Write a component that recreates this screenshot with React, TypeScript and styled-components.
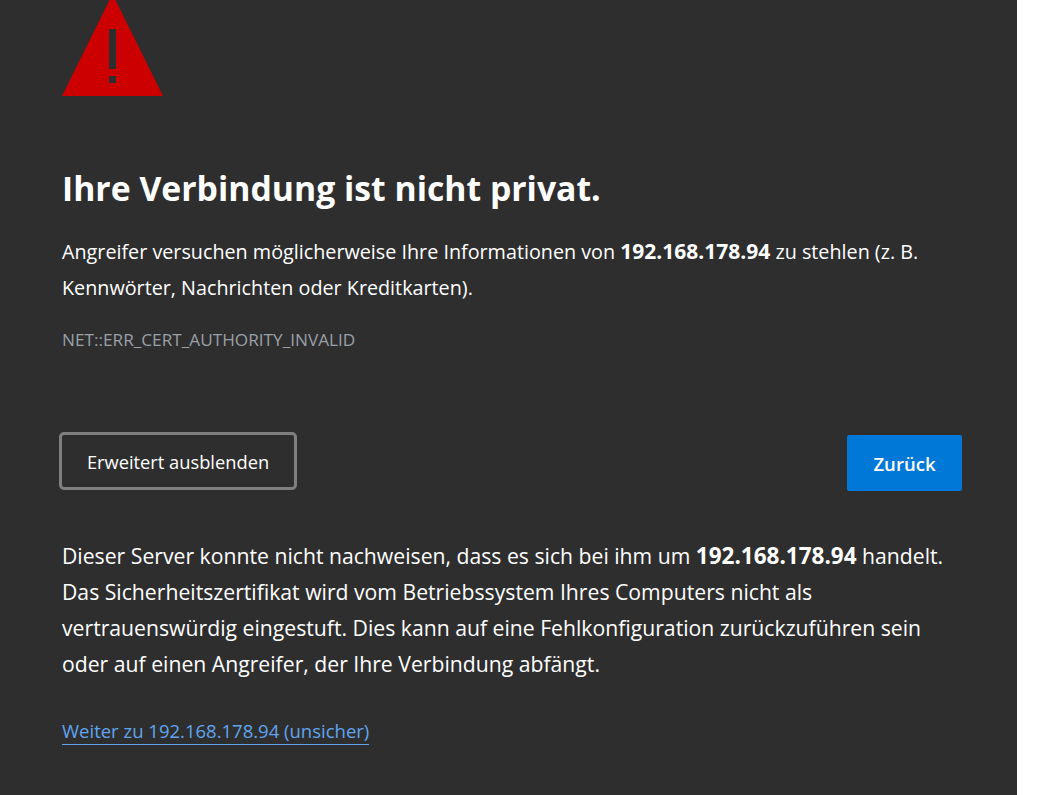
import React from 'react';
import styled, { createGlobalStyle } from 'styled-components';

const Global = createGlobalStyle`
  html, body { margin: 0; padding: 0; background: #fff; height: 100%; overflow: hidden; }
  #root { height: 100%; }
`;
const Page = styled.main`
  width: 1017px; height: 795px; box-sizing: border-box; background: #2e2e2e; color: #fff;
  padding: 0 55px 0 62px; font-family: "Open Sans", "Noto Sans", sans-serif; overflow: hidden;
`;
const Warning = styled.svg`display: block; width: 101px; height: 96px;`;
const Title = styled.h1`margin: 68px 0 0; font-size: 33.76px; line-height: 48px; font-weight: 700;`;
const Strong = styled.b<{ $size: number }>`font-size: ${p => p.$size}px; line-height: 1;`;
const Intro = styled.p`margin: 22px 0 0; font-size: 19.75px; line-height: 36px;`;
const Code = styled.div`margin-top: 23px; font-size: 17.2px; line-height: 22px; color: #9aa0a6;`;
const Actions = styled.div`display: flex; justify-content: space-between; align-items: flex-start; margin-top: 81px;`;
const Toggle = styled.button`
  width: 238px; height: 58px; margin-left: -3px; box-sizing: border-box; background: #2e2e2e; color: #fff;
  border: 3px solid #7f7f7f; border-radius: 5px; font: 400 18.3px "Open Sans", sans-serif; padding: 0;
`;
const Back = styled.button`
  width: 115px; height: 56px; margin-top: 3px; background: #0078d7; color: #fff; border: 0; border-radius: 2px;
  font: 600 18.6px "Open Sans", sans-serif; padding: 0;
`;
const Details = styled.p`margin: 47px 0 0; font-size: 21.2px; line-height: 36px;`;
const Proceed = styled.a`display: inline-block; margin-top: 36px; font-size: 18.5px; line-height: 26px; color: #60a5ee; text-decoration: none; border-bottom: 1px solid #60a5ee;`;

export default function App() {
  return (
    <>
      <Global />
      <Page>
        <Warning viewBox="0 0 101 96">
          <polygon points="50.5,-6 101,96 0,96" fill="#cc0000" />
          <rect x="47" y="29" width="7" height="40" fill="#2e2e2e" />
          <rect x="47" y="76" width="7" height="7" fill="#2e2e2e" />
        </Warning>
        <Title>Ihre Verbindung ist nicht privat.</Title>
        <Intro>Angreifer versuchen möglicherweise Ihre Informationen von <Strong $size={21}>192.168.178.94</Strong> zu stehlen (z. B. Kennwörter, Nachrichten oder Kreditkarten).</Intro>
        <Code>NET::ERR_CERT_AUTHORITY_INVALID</Code>
        <Actions>
          <Toggle>Erweitert ausblenden</Toggle>
          <Back>Zurück</Back>
        </Actions>
        <Details>Dieser Server konnte nicht nachweisen, dass es sich bei ihm um <Strong $size={22.5}>192.168.178.94</Strong> handelt. Das Sicherheitszertifikat wird vom Betriebssystem Ihres Computers nicht als vertrauenswürdig eingestuft. Dies kann auf eine Fehlkonfiguration zurückzuführen sein oder auf einen Angreifer, der Ihre Verbindung abfängt.</Details>
        <Proceed href="#">Weiter zu 192.168.178.94 (unsicher)</Proceed>
      </Page>
    </>
  );
}
